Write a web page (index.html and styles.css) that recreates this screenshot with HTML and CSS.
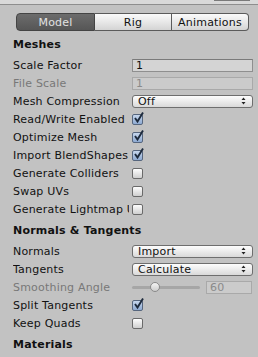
FILE: index.html
```html
<!DOCTYPE html>
<html lang="en">
<head>
  <meta charset="UTF-8" />
  <title>Model Import Settings</title>
  <link rel="stylesheet" href="styles.css">
</head>
<body>
  <div class="top"><span class="top-btn"></span></div>

  <div class="tabs">
    <div class="tab first active">Model</div>
    <div class="tab rig">Rig</div>
    <div class="tab last">Animations</div>
  </div>

  <section class="group">
    <h2>Meshes</h2>
    <div class="row"><span class="label">Scale Factor</span><span class="field">1</span></div>
    <div class="row disabled"><span class="label">File Scale</span><span class="field">1</span></div>
    <div class="row"><span class="label">Mesh Compression</span>
      <span class="select">Off<svg class="arrows" width="5" height="8" viewBox="0 0 5 8"><path d="M0.5 3L2.5 0.5L4.5 3Z M0.5 5L2.5 7.5L4.5 5Z" fill="#222"/></svg></span>
    </div>
    <div class="row"><span class="label">Read/Write Enabled</span><span class="check on"><svg width="13" height="13" viewBox="0 0 13 13"><path d="M3 6L5.5 9.5L11 0.5" fill="none" stroke="#1d2a3c" stroke-width="1.9"/></svg></span></div>
    <div class="row"><span class="label">Optimize Mesh</span><span class="check on"><svg width="13" height="13" viewBox="0 0 13 13"><path d="M3 6L5.5 9.5L11 0.5" fill="none" stroke="#1d2a3c" stroke-width="1.9"/></svg></span></div>
    <div class="row"><span class="label">Import BlendShapes</span><span class="check on"><svg width="13" height="13" viewBox="0 0 13 13"><path d="M3 6L5.5 9.5L11 0.5" fill="none" stroke="#1d2a3c" stroke-width="1.9"/></svg></span></div>
    <div class="row"><span class="label">Generate Colliders</span><span class="check"></span></div>
    <div class="row"><span class="label">Swap UVs</span><span class="check"></span></div>
    <div class="row"><span class="label">Generate Lightmap UVs</span><span class="check"></span></div>
  </section>

  <section class="group">
    <h2>Normals &amp; Tangents</h2>
    <div class="row"><span class="label">Normals</span>
      <span class="select">Import<svg class="arrows" width="5" height="8" viewBox="0 0 5 8"><path d="M0.5 3L2.5 0.5L4.5 3Z M0.5 5L2.5 7.5L4.5 5Z" fill="#222"/></svg></span>
    </div>
    <div class="row"><span class="label">Tangents</span>
      <span class="select">Calculate<svg class="arrows" width="5" height="8" viewBox="0 0 5 8"><path d="M0.5 3L2.5 0.5L4.5 3Z M0.5 5L2.5 7.5L4.5 5Z" fill="#222"/></svg></span>
    </div>
    <div class="row disabled"><span class="label">Smoothing Angle</span>
      <span class="slider"><span class="track"><span class="thumb"></span></span></span>
      <span class="field num">60</span>
    </div>
    <div class="row"><span class="label">Split Tangents</span><span class="check on"><svg width="13" height="13" viewBox="0 0 13 13"><path d="M3 6L5.5 9.5L11 0.5" fill="none" stroke="#1d2a3c" stroke-width="1.9"/></svg></span></div>
    <div class="row"><span class="label">Keep Quads</span><span class="check"></span></div>
  </section>

  <section class="group">
    <h2>Materials</h2>
  </section>
</body>
</html>
```

FILE: styles.css
```css
/* Base */
*, *::before, *::after {
  box-sizing: border-box;
}

body {
  margin: 0;
  width: 258px;
  height: 357px;
  overflow: hidden;
  background-color: #c2c2c2;
  color: #111;
  font-family: "DejaVu Sans", Verdana, sans-serif;
  font-size: 11px;
  letter-spacing: 0.2px;
}

/* Top strip */
.top {
  height: 5px;
  background-color: #d9d9d9;
  border-bottom: 1px solid #8e8e8e;
  display: flex;
  justify-content: flex-end;
}

.top-btn {
  width: 36px;
  height: 1px;
  margin-right: 8px;
  background-color: #7a7a7a;
}

/* Tabs */
.tabs {
  display: flex;
  height: 18px;
  margin: 8px 0 0 16px;
}

.tab {
  width: 77px;
  display: flex;
  align-items: center;
  justify-content: center;
  border: 1px solid #5b5b5b;
  border-left: none;
  background: linear-gradient(#fbfbfb, #d4d4d4);
  color: #111;
}

.tab.first {
  width: 79px;
  border-left: 1px solid #4a4a4a;
  border-radius: 4px 0 0 4px;
}

.tab.last {
  border-radius: 0 4px 4px 0;
}

.tab.active {
  background: linear-gradient(#6c6c6c, #565656);
  border-color: #444;
  color: #e2e2e2;
}

/* Groups */
h2 {
  margin: 5px 0 2px 13px;
  font-size: 11px;
  line-height: 18px;
  font-weight: bold;
}

.group + .group h2 {
  margin-top: 4px;
}

.row {
  display: flex;
  align-items: center;
  height: 18px;
  padding-left: 13px;
}

.label {
  flex: none;
  width: 116px;
  margin-right: 3px;
  white-space: nowrap;
  overflow: hidden;
}

.row.disabled .label {
  color: #787878;
}

/* Text fields */
.field {
  flex: none;
  width: 121px;
  height: 13px;
  padding-left: 3px;
  line-height: 11px;
  border: 1px solid #8f8f8f;
  border-top-color: #7a7a7a;
  background-color: #d4d4d4;
}

.row.disabled .field {
  border-color: #a9a9a9;
  background-color: #cbcbcb;
  color: #8a8a8a;
}

.field.num {
  width: 46px;
  margin-left: 6px;
}

/* Dropdowns */
.select {
  flex: none;
  width: 121px;
  height: 13px;
  padding: 0 5px;
  display: flex;
  align-items: center;
  justify-content: space-between;
  border: 1px solid #6e6e6e;
  border-radius: 3px;
  background: linear-gradient(#fdfdfd, #d9d9d9);
  line-height: 11px;
}

.arrows {
  margin-right: 1px;
}

/* Checkboxes */
.check {
  flex: none;
  position: relative;
  width: 11px;
  height: 11px;
  border: 1px solid #6a6a6a;
  border-radius: 2px;
  background: linear-gradient(#fdfdfd, #cfcfcf);
}

.check.on {
  background: linear-gradient(#c6d6ec, #8eaad2);
  border-color: #56667e;
}

.check svg {
  position: absolute;
  left: -1px;
  top: -3px;
}

/* Slider */
.slider {
  flex: none;
  width: 68px;
  display: flex;
  align-items: center;
}

.track {
  position: relative;
  width: 100%;
  height: 3px;
  border-radius: 2px;
  background-color: #a6a6a6;
}

.thumb {
  position: absolute;
  left: 18px;
  top: -4px;
  width: 10px;
  height: 10px;
  border-radius: 50%;
  border: 1px solid #8a8a8a;
  background: linear-gradient(#f4f4f4, #cdcdcd);
}
```
